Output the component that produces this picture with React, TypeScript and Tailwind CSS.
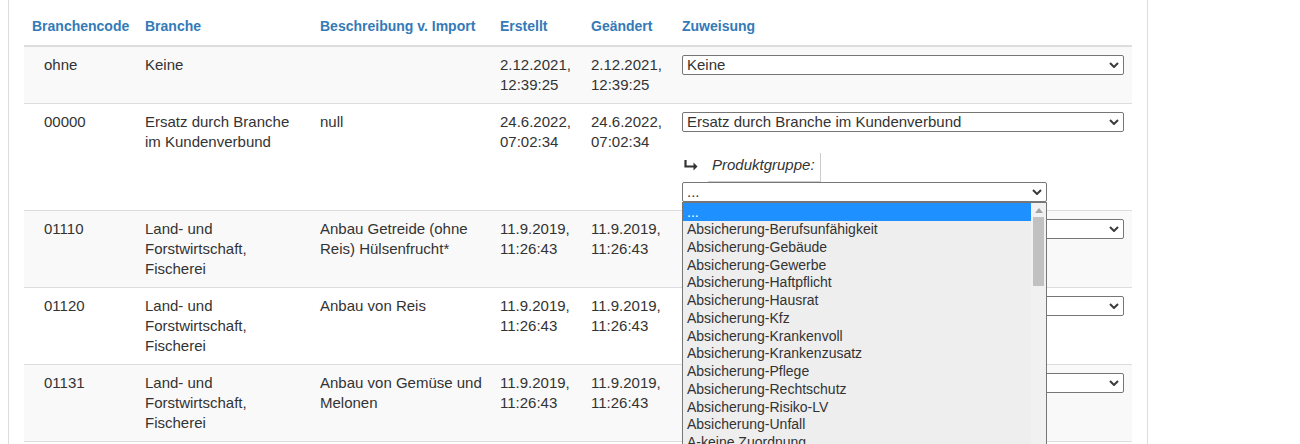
import clsx from "clsx";

type Row = {
  code: string;
  branche: string;
  beschreibung: string;
  erstellt: string;
  geaendert: string;
  zuweisung: string;
  produktgruppe?: boolean;
};

const rows: Row[] = [
  { code: "ohne", branche: "Keine", beschreibung: "", erstellt: "2.12.2021, 12:39:25", geaendert: "2.12.2021, 12:39:25", zuweisung: "Keine" },
  {
    code: "00000",
    branche: "Ersatz durch Branche im Kundenverbund",
    beschreibung: "null",
    erstellt: "24.6.2022, 07:02:34",
    geaendert: "24.6.2022, 07:02:34",
    zuweisung: "Ersatz durch Branche im Kundenverbund",
    produktgruppe: true,
  },
  { code: "01110", branche: "Land- und Forstwirtschaft, Fischerei", beschreibung: "Anbau Getreide (ohne Reis) Hülsenfrucht*", erstellt: "11.9.2019, 11:26:43", geaendert: "11.9.2019, 11:26:43", zuweisung: "Land- und Forstwirtschaft, Fischerei" },
  { code: "01120", branche: "Land- und Forstwirtschaft, Fischerei", beschreibung: "Anbau von Reis", erstellt: "11.9.2019, 11:26:43", geaendert: "11.9.2019, 11:26:43", zuweisung: "Land- und Forstwirtschaft, Fischerei" },
  { code: "01131", branche: "Land- und Forstwirtschaft, Fischerei", beschreibung: "Anbau von Gemüse und Melonen", erstellt: "11.9.2019, 11:26:43", geaendert: "11.9.2019, 11:26:43", zuweisung: "Land- und Forstwirtschaft, Fischerei" },
];

const produktgruppen = [
  "...",
  "Absicherung-Berufsunfähigkeit",
  "Absicherung-Gebäude",
  "Absicherung-Gewerbe",
  "Absicherung-Haftpflicht",
  "Absicherung-Hausrat",
  "Absicherung-Kfz",
  "Absicherung-Krankenvoll",
  "Absicherung-Krankenzusatz",
  "Absicherung-Pflege",
  "Absicherung-Rechtschutz",
  "Absicherung-Risiko-LV",
  "Absicherung-Unfall",
  "A-keine Zuordnung",
  "Altersvorsorge",
];

function Chevron() {
  return (
    <svg width="10" height="6" viewBox="0 0 10 6" className="shrink-0">
      <path d="M1 1l4 4 4-4" fill="none" stroke="#3b3b3b" strokeWidth="2" />
    </svg>
  );
}

function FakeSelect({ value, className }: { value: string; className?: string }) {
  return (
    <div
      className={clsx(
        "flex h-5 items-center justify-between gap-2 rounded-[2px] border border-[#767676] bg-white pl-1 pr-[4px]",
        className
      )}
    >
      <span className="truncate leading-4">{value}</span>
      <Chevron />
    </div>
  );
}

// the opened native dropdown of the Produktgruppe select
function Listbox() {
  return (
    <div className="absolute left-0 top-full z-10 flex h-[260px] w-full overflow-hidden border border-[#767676] bg-[#eeeeee] text-sm">
      <div className="min-w-0 flex-1">
        {produktgruppen.map((o, i) => (
          <div
            key={o}
            className={clsx(
              "truncate pl-1",
              i === 0 ? "h-[18px] bg-[#1e90ff] leading-[18px] text-white" : "h-[17.75px] leading-[17.75px] text-[#333]"
            )}
          >
            {o}
          </div>
        ))}
      </div>
      <div className="flex w-[15px] shrink-0 flex-col items-center bg-[#f1f1f1]">
        <svg width="8" height="5" viewBox="0 0 8 5" className="mt-[5px]">
          <path d="M0 5L4 0L8 5Z" fill="#a3a3a3" />
        </svg>
        <div className="mt-[4px] h-[69px] w-[11px] bg-[#c1c1c1]" />
      </div>
    </div>
  );
}

function ProduktgruppeField() {
  return (
    <div className="mt-[21px]">
      <div className="flex items-start">
        <svg width="14" height="11" viewBox="0 0 14 11" className="ml-[2px] mt-[7px] shrink-0">
          <path d="M1.5 0v6.5H11" fill="none" stroke="#333" strokeWidth="2.2" />
          <path d="M9.5 2.5L13.5 6.5L9.5 10.5Z" fill="#333" />
        </svg>
        <span className="ml-[10px] h-[29px] border-b border-r border-[#cccccc] pb-[6px] pl-1 pr-[5px] pt-[2px] italic">
          Produktgruppe:
        </span>
      </div>
      <div className="relative w-[365px]">
        <FakeSelect value="..." />
        <Listbox />
      </div>
    </div>
  );
}

export default function App() {
  return (
    <div className="min-h-screen bg-white font-['Liberation_Sans',Arial,sans-serif] text-[15px] leading-5 text-[#333]">
      <div className="ml-2 min-h-screen w-[1140px] border-x border-[#dddddd] px-[15px] pt-2">
        <table className="w-full table-fixed border-collapse">
          <colgroup>
            <col className="w-[113px]" />
            <col className="w-[175px]" />
            <col className="w-[180px]" />
            <col className="w-[91px]" />
            <col className="w-[91px]" />
            <col />
          </colgroup>
          <thead>
            <tr className="border-b-2 border-[#dddddd] text-left text-sm font-bold text-[#337ab7]">
              <th className="px-2 pb-[9px] pt-2">Branchencode</th>
              <th className="px-2 pb-[9px] pt-2">Branche</th>
              <th className="px-2 pb-[9px] pt-2">Beschreibung v. Import</th>
              <th className="px-2 pb-[9px] pt-2">Erstellt</th>
              <th className="px-2 pb-[9px] pt-2">Geändert</th>
              <th className="px-2 pb-[9px] pt-2">Zuweisung</th>
            </tr>
          </thead>
          <tbody>
            {rows.map((r, i) => (
              <tr key={r.code} className={clsx("border-b border-[#dddddd] align-top", i % 2 === 0 && "bg-[#f9f9f9]")}>
                <td className="py-2 pl-5 pr-2">{r.code}</td>
                <td className="p-2">{r.branche}</td>
                <td className="p-2">{r.beschreibung}</td>
                <td className="p-2">{r.erstellt}</td>
                <td className="p-2">{r.geaendert}</td>
                <td className="p-2">
                  <FakeSelect value={r.zuweisung} />
                  {r.produktgruppe && <ProduktgruppeField />}
                </td>
              </tr>
            ))}
          </tbody>
        </table>
      </div>
    </div>
  );
}
